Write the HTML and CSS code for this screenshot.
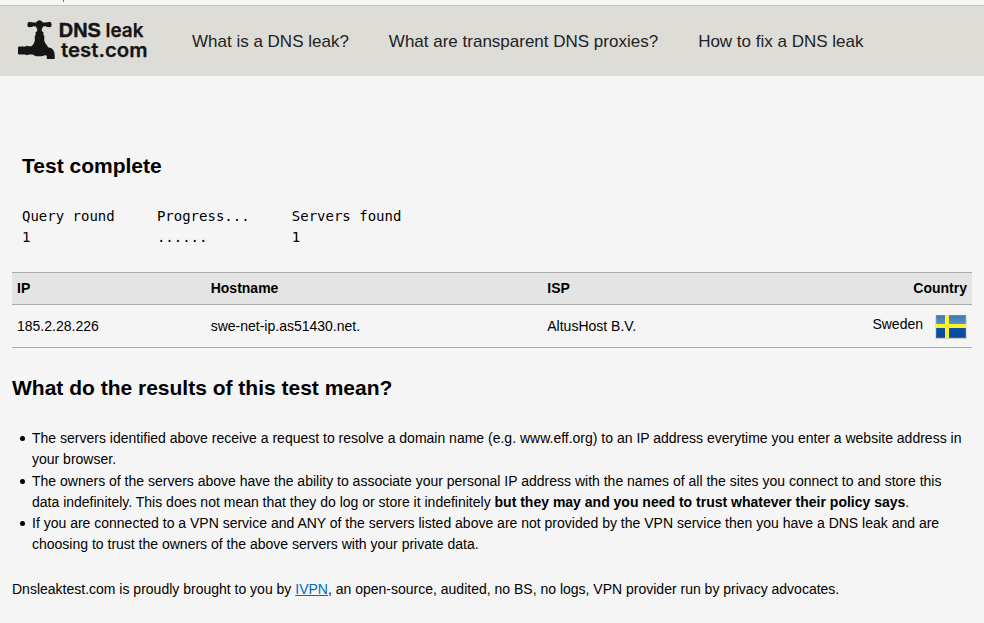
FILE: index.html
```html
<!DOCTYPE html>
<html lang="en">
<head>
<meta charset="utf-8">
<title>DNS leak test</title>
<link rel="stylesheet" href="styles.css">
</head>
<body>
<div class="edge"><span class="edge-mark"></span></div>
<header class="header">
  <svg class="logo" width="132" height="42" viewBox="18 19 132 42" role="img" aria-label="DNS leak test.com">
    <g fill="#151515">
      <path d="M28 22.2C30 21.6 32 22 33.5 22.6L36.2 22.6C37 21.2 38.2 20.3 39.5 20.3S42 21.2 42.8 22.6L45.5 22.6C47 22 49 21.6 51 22.2Q52.2 24.5 51 27C49 27.4 47 27 45.5 26.2L43 26.6Q42.8 28 41.8 28.8V31L43.4 32.2V35L44.3 36V40.5C44.6 42.4 45.6 43.8 47.2 45.6L48 47.3L51 48C53.5 49.5 54.7 52 54.7 55.5V59H46.8V57C46.8 55.6 46 55 44.8 55.2L42 56.3H36L32.5 54.6H29L27 55.3L25.5 54.6H19L18 53.8V47.2L19 46.5H25.5L27 45.8L29 46.3H31.4C33.4 44.4 34.4 42.6 34.8 40.5V36L35.6 35V32.2L37.2 31V28.8Q36.2 28 36 26.6L33.5 26.2C32 27 30 27.4 28 27Q26.8 24.5 28 22.2Z"/>
      <g class="wordmark">
        <text x="58.8" y="37" font-size="20" stroke="#151515" stroke-width=".5" textLength="42" lengthAdjust="spacingAndGlyphs">DNS</text>
        <text class="rounded" x="105.5" y="37" font-size="19" textLength="38" lengthAdjust="spacingAndGlyphs">leak</text>
        <text class="rounded" x="61" y="57" font-size="19.5" textLength="86.5" lengthAdjust="spacingAndGlyphs">test.com</text>
      </g>
    </g>
  </svg>
  <nav class="nav">
    <a>What is a DNS leak?</a>
    <a>What are transparent DNS proxies?</a>
    <a>How to fix a DNS leak</a>
  </nav>
</header>
<main class="main">
  <section class="status">
    <h2>Test complete</h2>
    <div class="progress">
      <span>Query round</span><span>Progress...</span><span>Servers found</span>
      <span>1</span><span>......</span><span>1</span>
    </div>
  </section>
  <table class="results">
    <thead>
      <tr><th class="ip">IP</th><th class="host">Hostname</th><th>ISP</th><th class="country">Country</th></tr>
    </thead>
    <tbody>
      <tr>
        <td>185.2.28.226</td><td>swe-net-ip.as51430.net.</td><td>AltusHost B.V.</td>
        <td class="country"><div class="place"><span>Sweden</span>
          <svg class="flag" width="32" height="24" viewBox="0 0 32 24" aria-hidden="true">
            <defs>
              <linearGradient id="blue" x1="0" y1="0" x2="0" y2="1"><stop offset="0" stop-color="#3f74b1"/><stop offset=".4" stop-color="#5f92c8"/><stop offset=".5" stop-color="#0f53a3"/><stop offset="1" stop-color="#07489b"/></linearGradient>
            </defs>
            <rect x=".5" y="1" width="31" height="23" fill="#aaa" opacity=".6"/>
            <rect x="1" y="0" width="30" height="23" fill="url(#blue)"/>
            <path d="M10 0h4v9h17v4H14v10h-4V13H1V9h9z" fill="#fff02a"/>
            <path d="M1.5 .5h29v22h-29z" fill="none" stroke="#fff" stroke-opacity=".15"/>
          </svg></div></td>
      </tr>
    </tbody>
  </table>
  <h2 class="meaning">What do the results of this test mean?</h2>
  <ul class="notes">
    <li>The servers identified above receive a request to resolve a domain name (e.g. www.eff.org) to an IP address everytime you enter a website address in your browser.</li>
    <li>The owners of the servers above have the ability to associate your personal IP address with the names of all the sites you connect to and store this data indefinitely. This does not mean that they do log or store it indefinitely <b>but they may and you need to trust whatever their policy says</b>.</li>
    <li>If you are connected to a VPN service and ANY of the servers listed above are not provided by the VPN service then you have a DNS leak and are choosing to trust the owners of the above servers with your private data.</li>
  </ul>
  <p class="credit">Dnsleaktest.com is proudly brought to you by <a href="#">IVPN</a>, an open-source, audited, no BS, no logs, VPN provider run by privacy advocates.</p>
</main>
</body>
</html>
```
FILE: styles.css
```css
* { box-sizing: border-box; }
body {
  margin: 0;
  height: 623px;
  overflow: hidden;
  background: #f5f5f5;
  color: #000;
  font: 14px/21px "Liberation Sans", Arial, sans-serif;
}
.edge { height: 6px; background: #f6f6f4; border-bottom: 1px solid #c2c2bf; }
.edge-mark { display: block; width: 1px; height: 2px; margin-left: 63px; background: #777; }
.header { height: 70px; display: flex; align-items: flex-start; padding-left: 18px; background: #dddcd7; }
.logo { flex: none; margin-top: 13px; }
.wordmark { font-family: "Liberation Sans", Arial, sans-serif; font-weight: bold; }
.rounded { font-family: Inter, "Liberation Sans", sans-serif; font-weight: 600; stroke: #151515; stroke-width: .25; }
.nav { display: flex; gap: 40px; margin: 26px 0 0 42px; font-size: 17px; line-height: 20px; color: #222; white-space: nowrap; }
.main { padding: 0 12px; }
h2 { margin: 0; font-size: 21px; line-height: 24px; font-weight: bold; }
.status { padding: 78px 10px 0; }
.progress {
  display: grid;
  grid-template-columns: 134.9px 134.9px 135px;
  margin-top: 28px;
  font: 14px/21px "DejaVu Sans Mono", monospace;
}
.results { width: 960px; margin-top: 24px; border-collapse: separate; border-spacing: 0; table-layout: fixed; border-top: 1px solid #aaa; }
.results th, .results td { padding: 0 5px; border-bottom: 1px solid #aaa; text-align: left; }
.results th { height: 32px; background: #e4e4e4; }
.results td { height: 43px; padding-top: 1px; }
.results .ip { width: 193.7px; }
.results .host { width: 336.6px; }
.results .country { text-align: right; }
.place { display: flex; justify-content: flex-end; align-items: center; gap: 12px; }
.place span { margin-top: -4px; }
.place .flag { margin-top: 1px; }
.flag { flex: none; }
.meaning { margin-top: 28px; }
.notes { margin: 28px 0 0; padding: 0 0 0 20px; list-style: none; }
.notes li::before {
  content: "";
  float: left;
  width: 5px;
  height: 5px;
  margin: 8px 0 0 -12px;
  border-radius: 50%;
  background: #000;
}
.notes li:first-child { margin-bottom: 1px; }
.credit { margin: 24px 0 0; }
.credit a { color: #0069c8; }
```
